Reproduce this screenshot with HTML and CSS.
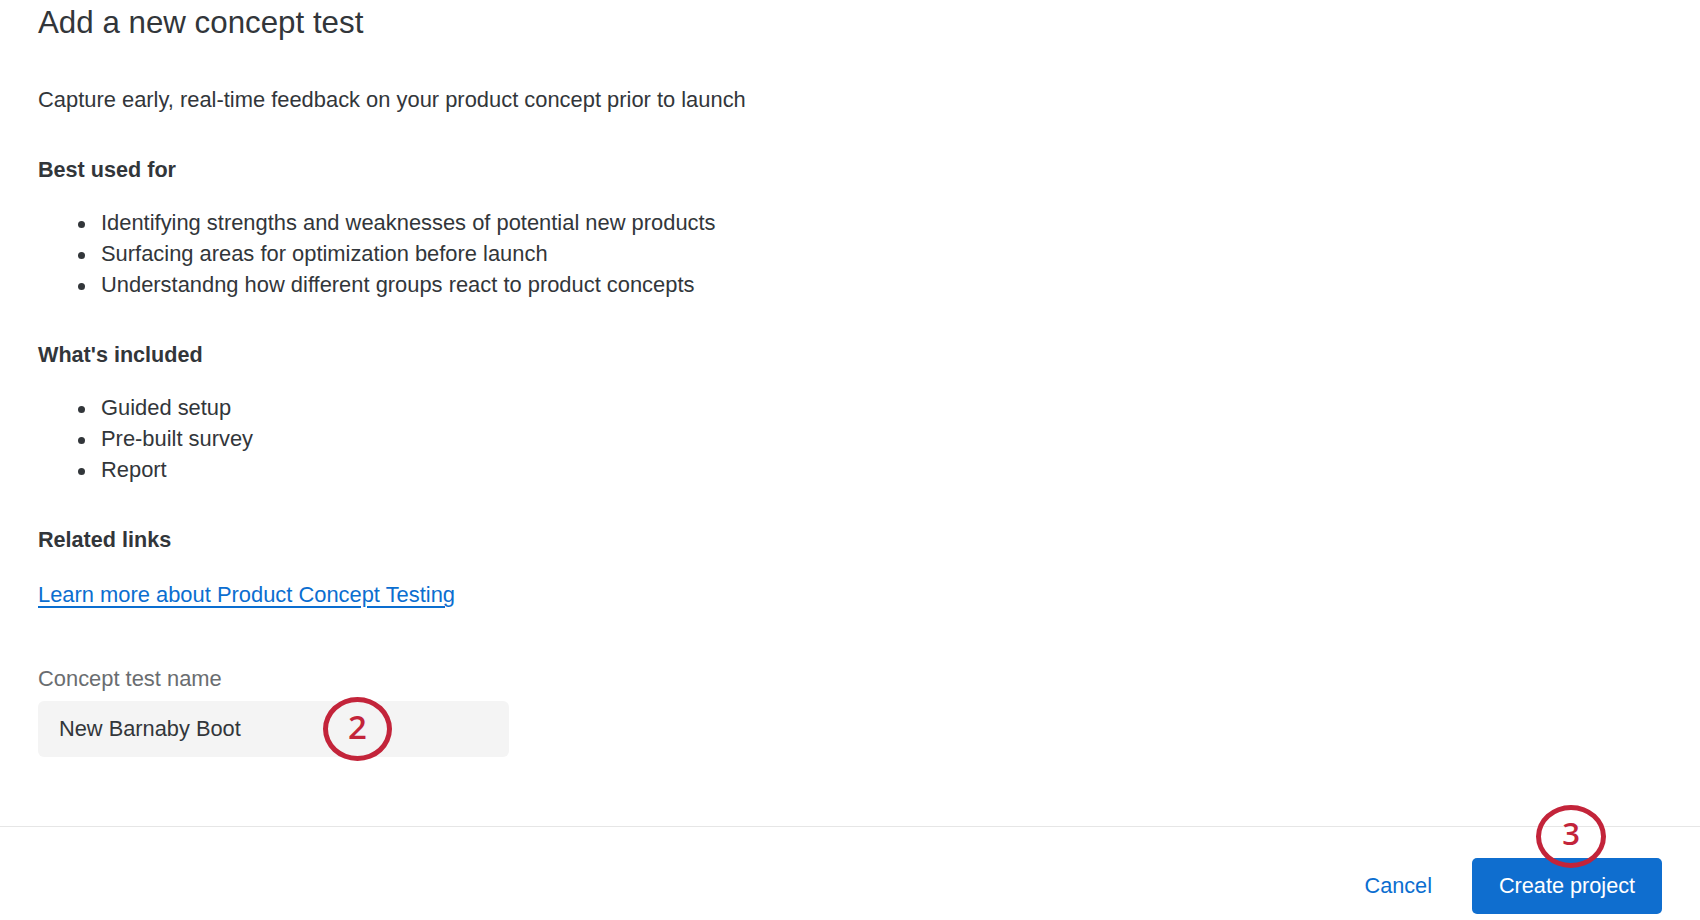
FILE: index.html
```html
<!DOCTYPE html>
<html lang="en">
<head>
<meta charset="utf-8">
<title>Add a new concept test</title>
<link rel="stylesheet" href="styles.css">
</head>
<body>
<main class="content">
  <h1 class="title">Add a new concept test</h1>
  <p class="lead">Capture early, real-time feedback on your product concept prior to launch</p>

  <h2 class="section-title">Best used for</h2>
  <ul class="list">
    <li class="item"><span class="dot"></span><span>Identifying strengths and weaknesses of potential new products</span></li>
    <li class="item"><span class="dot"></span><span>Surfacing areas for optimization before launch</span></li>
    <li class="item"><span class="dot"></span><span>Understandng how different groups react to product concepts</span></li>
  </ul>

  <h2 class="section-title">What's included</h2>
  <ul class="list">
    <li class="item"><span class="dot"></span><span>Guided setup</span></li>
    <li class="item"><span class="dot"></span><span>Pre-built survey</span></li>
    <li class="item"><span class="dot"></span><span>Report</span></li>
  </ul>

  <h2 class="section-title">Related links</h2>
  <p class="links"><a class="link" href="#">Learn more about Product Concept Testing</a></p>

  <label class="field-label" for="name">Concept test name</label>
  <div class="field">
    <input class="input" id="name" type="text" value="New Barnaby Boot">
    <span class="marker marker-2">2</span>
  </div>
</main>
<footer class="footer">
  <button class="btn-cancel" type="button">Cancel</button>
  <div class="primary-wrap">
    <button class="btn-primary" type="button">Create project</button>
    <span class="marker marker-3">3</span>
  </div>
</footer>
</body>
</html>
```
FILE: styles.css
```css
html, body {
  margin: 0;
  padding: 0;
  background: #ffffff;
}

body {
  font-family: "Liberation Sans", Arial, sans-serif;
  font-size: 21.9px;
  line-height: 31px;
  color: #32363a;
  width: 1700px;
  overflow: hidden;
}

.content {
  padding: 0 38px;
  display: flex;
  flex-direction: column;
  align-items: flex-start;
}

.title {
  margin: 0;
  font-size: 31.3px;
  line-height: 46px;
  font-weight: normal;
  color: #32363a;
}

.lead {
  margin: 38px 0 0;
}

.section-title {
  margin: 39px 0 0;
  font-size: 21.6px;
  line-height: 31px;
  font-weight: bold;
}

.list {
  list-style: none;
  margin: 22px 0 0;
  padding: 0;
}

.item {
  display: flex;
  align-items: flex-start;
}

.dot {
  flex: none;
  width: 7px;
  height: 7px;
  border-radius: 50%;
  background: #32363a;
  margin: 14px 16px 0 40px;
}

.links {
  margin: 24px 0 0;
}

.link {
  color: #0b6ed0;
  text-decoration: underline;
  text-underline-offset: 4px;
  text-decoration-thickness: 1.5px;
}

.field-label {
  margin-top: 53px;
  color: #6a6d70;
}

.field {
  position: relative;
  margin-top: 7px;
}

.input {
  box-sizing: border-box;
  width: 471px;
  height: 56px;
  padding: 0 21px;
  border: none;
  border-radius: 6px;
  background: #f4f4f4;
  font-family: inherit;
  font-size: 21.8px;
  color: #32363a;
  outline: none;
}

.marker {
  position: absolute;
  box-sizing: border-box;
  border: 5px solid #c3243a;
  border-radius: 50%;
  color: #c3243a;
  font-family: "Open Sans", "Liberation Sans", sans-serif;
  font-weight: 600;
  font-size: 33px;
  display: flex;
  align-items: center;
  justify-content: center;
  padding-bottom: 6px;
}

.marker-2 {
  left: 285px;
  top: -4px;
  width: 69px;
  height: 64px;
}

.marker-3 {
  left: 64px;
  top: -53px;
  width: 70px;
  height: 63px;
  font-size: 31px;
  background: transparent;
}

.footer {
  margin-top: 69px;
  border-top: 1px solid #e6e6e6;
  padding: 31px 38px 6px;
  display: flex;
  justify-content: flex-end;
  align-items: center;
  gap: 40px;
}

.btn-cancel {
  border: none;
  background: none;
  padding: 0;
  font-family: inherit;
  font-size: 21.7px;
  color: #0b6ed0;
  cursor: pointer;
}

.primary-wrap {
  position: relative;
}

.btn-primary {
  display: block;
  box-sizing: border-box;
  width: 190px;
  height: 56px;
  border: none;
  border-radius: 5px;
  background: #0f6ecf;
  color: #ffffff;
  font-family: inherit;
  font-size: 21.7px;
  cursor: pointer;
}
```
